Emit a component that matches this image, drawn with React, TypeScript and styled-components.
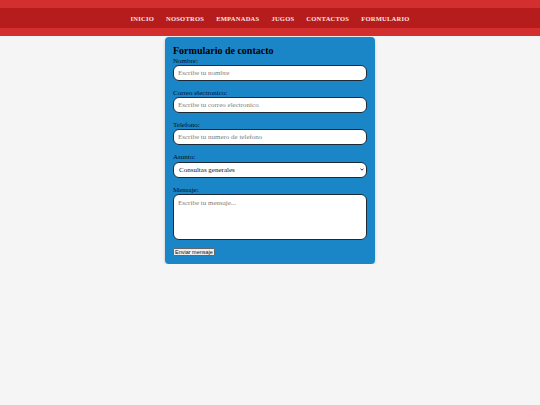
import React from 'react';
import styled, { createGlobalStyle } from 'styled-components';

const GlobalStyle = createGlobalStyle`
  * { box-sizing: border-box; }
  html, body {
    margin: 0;
    padding: 0;
    background: #f5f5f5;
    font-family: "Liberation Serif", "Times New Roman", serif;
  }
`

const Header = styled.header`
  background: #d32f2f;
  padding: 8px 0;
`
const Nav = styled.nav`
  background: #b71c1c;
  height: 20px;
  display: flex;
  align-items: center;
  justify-content: center;
  gap: 12px;
`
const NavLink = styled.a`
  color: #fbe3e3;
  font-size: 6.5px;
  font-weight: bold;
  letter-spacing: 0.25px;
  text-transform: uppercase;
  text-decoration: none;
`
const Main = styled.main`
  display: flex;
  justify-content: center;
  padding-top: 1px;
`
const FormCard = styled.form`
  width: 210px;
  background: #1a86c8;
  border-radius: 4px;
  padding: 8px;
  box-shadow: 0 1px 3px rgba(0, 0, 0, 0.2);
`
const Title = styled.h2`
  margin: 0;
  font-size: 10px;
  line-height: 11.5px;
  color: #000;
`
const Label = styled.label`
  display: block;
  font-size: 7px;
  line-height: 8.25px;
  color: #00101f;
`
const fieldBase = `
  display: block;
  width: 100%;
  margin: 0 0 8px;
  border: 1px solid #1c2a36;
  border-radius: 6px;
  background: #fff;
  font-family: "Liberation Serif", "Times New Roman", serif;
  font-size: 7px;
  color: #222;
  outline: none;
  &::placeholder { color: #7d7d7d; }
`
const Input = styled.input`
  ${fieldBase}
  height: 16px;
  padding: 3px 4px;
`
const SelectWrap = styled.div`
  position: relative;
`
const Select = styled.select`
  ${fieldBase}
  appearance: none;
  height: 16px;
  padding: 0 12px 0 5px;
  color: #111;
`
const Chevron = styled.svg`
  position: absolute;
  right: 3px;
  top: 6px;
  width: 4px;
  height: 3px;
  pointer-events: none;
`
const TextArea = styled.textarea`
  ${fieldBase}
  height: 46px;
  padding: 4px;
  resize: none;
`
const SendButton = styled.button`
  display: block;
  margin-top: 1px;
  height: 8px;
  padding: 0 1px;
  font-family: "Liberation Sans", Arial, sans-serif;
  font-size: 5.5px;
  line-height: 6px;
  color: #111;
  background: #efefef;
  border: 1px solid #666;
  border-radius: 1px;
`

const links = ['Inicio', 'Nosotros', 'Empanadas', 'Jugos', 'Contactos', 'Formulario'];

export default function App() {
  return (
    <>
      <GlobalStyle />
      <Header>
        <Nav>
          {links.map(l => <NavLink key={l} href="#">{l}</NavLink>)}
        </Nav>
      </Header>
      <Main>
        <FormCard onSubmit={e => e.preventDefault()}>
          <Title>Formulario de contacto</Title>
          <Label htmlFor="nombre">Nombre:</Label>
          <Input id="nombre" placeholder="Escribe tu nombre" />
          <Label htmlFor="correo">Correo electronico:</Label>
          <Input id="correo" placeholder="Escribe tu correo electronico" />
          <Label htmlFor="telefono">Telefono:</Label>
          <Input id="telefono" placeholder="Escribe tu numero de telefono" />
          <Label htmlFor="asunto">Asunto:</Label>
          <SelectWrap>
            <Select id="asunto" defaultValue="generales">
              <option value="generales">Consultas generales</option>
              <option value="pedidos">Pedidos</option>
            </Select>
            <Chevron viewBox="0 0 8 6">
              <path d="M1 1.2 L4 4.4 L7 1.2" fill="none" stroke="#222" strokeWidth="1.8" />
            </Chevron>
          </SelectWrap>
          <Label htmlFor="mensaje">Mensaje:</Label>
          <TextArea id="mensaje" placeholder="Escribe tu mensaje..." />
          <SendButton type="submit">Enviar mensaje</SendButton>
        </FormCard>
      </Main>
    </>
  );
}
